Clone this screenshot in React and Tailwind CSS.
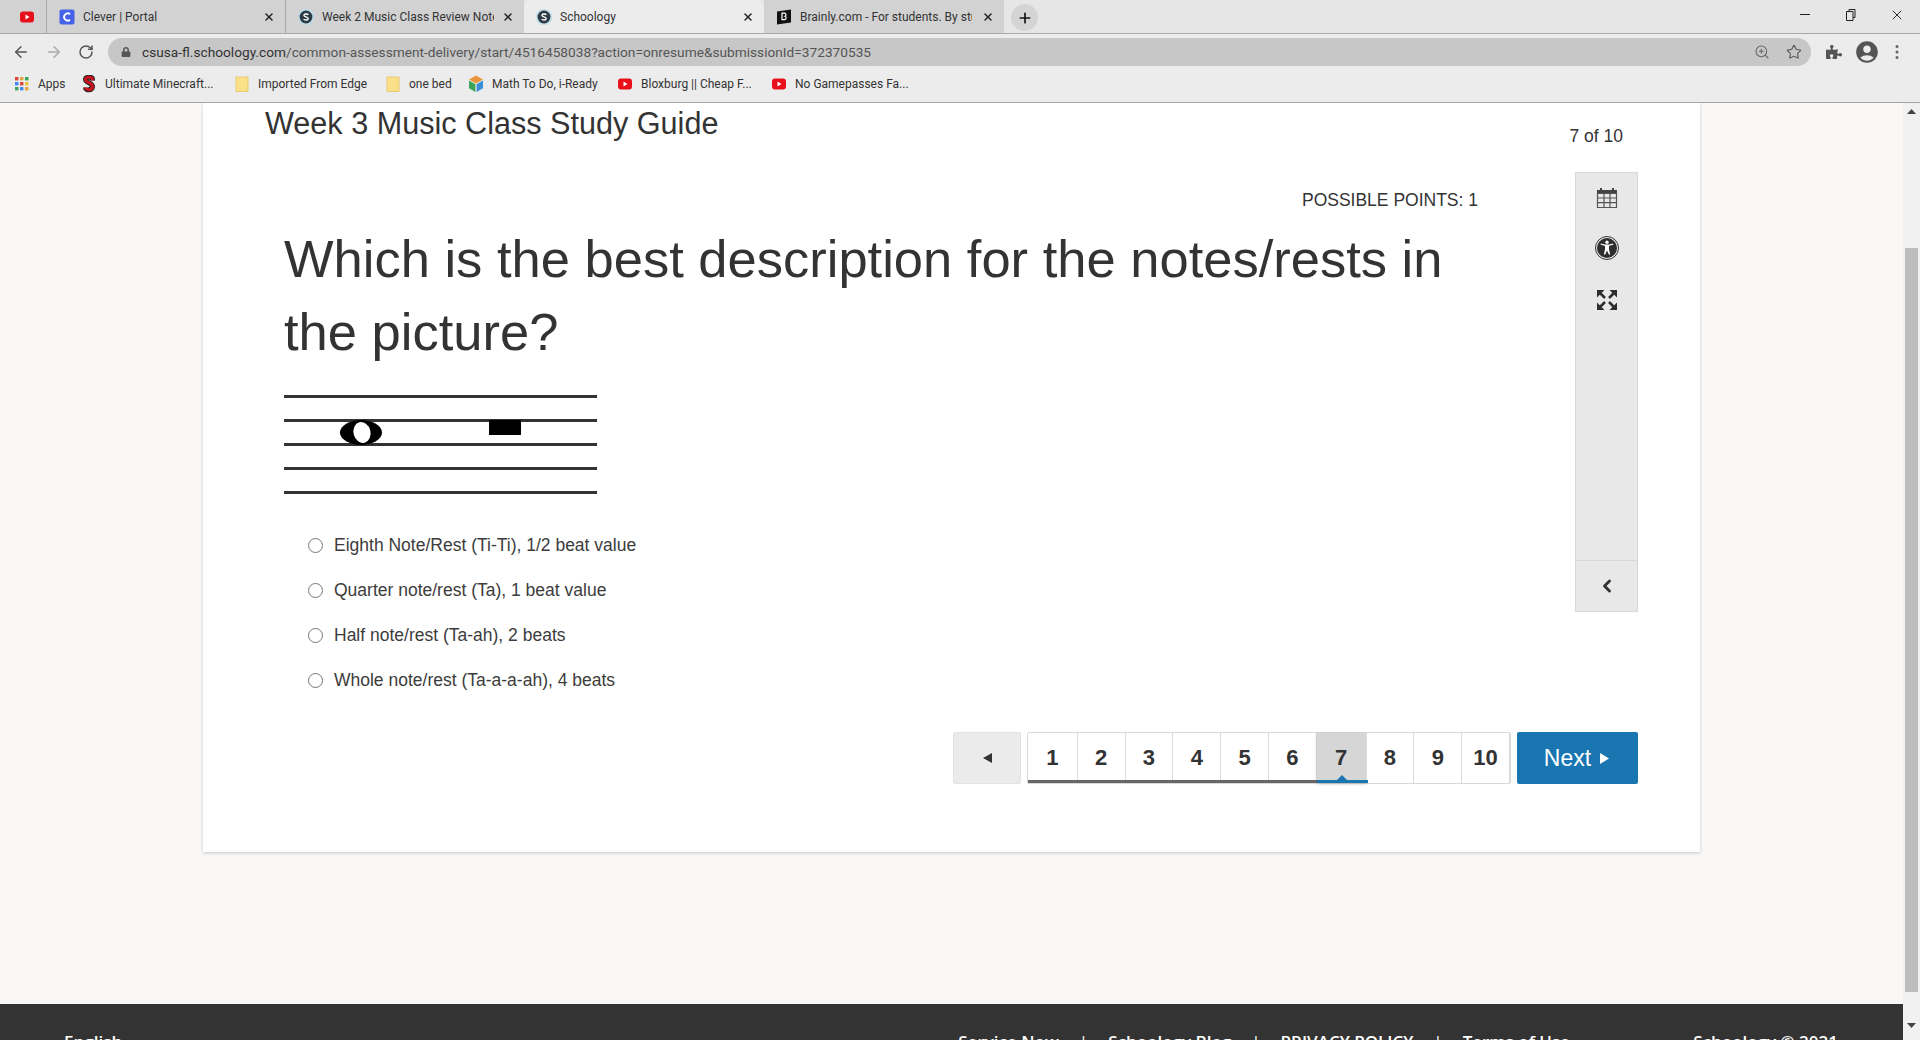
import React from "react";
import { ArrowLeft, ArrowRight, RotateCw, ZoomIn, Star, ChevronLeft, Plus, X } from "lucide-react";
import { FaLock, FaPuzzlePiece } from "react-icons/fa";
import { MdAccountCircle } from "react-icons/md";

const YT = () => (
  <svg width="16" height="16" viewBox="0 0 16 16" className="shrink-0">
    <rect x="1" y="2.5" width="14" height="11" rx="3" fill="#e8101a" />
    <path d="M6.5 5.5v5l4-2.5z" fill="#fff" />
  </svg>
);
const CleverIcon = () => (
  <svg width="16" height="16" viewBox="0 0 16 16" className="shrink-0">
    <rect x="0.5" y="0.5" width="15" height="15" rx="2" fill="#4563e8" />
    <path d="M11 5.2a3.6 3.6 0 1 0 0 5.6" fill="none" stroke="#fff" strokeWidth="1.8" />
  </svg>
);
const SchoologyIcon = () => (
  <svg width="16" height="16" viewBox="0 0 16 16" className="shrink-0">
    <circle cx="8" cy="8" r="8" fill="#bcdce8" />
    <circle cx="8" cy="8" r="6.4" fill="#2b3a45" />
    <path d="M10.4 5.8C9.6 4.8 6 4.6 5.9 6.4 5.8 8.2 10.3 7.6 10.2 9.6 10.1 11.4 6.4 11.2 5.6 10.1" fill="none" stroke="#fff" strokeWidth="1.4" />
  </svg>
);
const BrainlyIcon = () => (
  <svg width="16" height="16" viewBox="0 0 16 16" className="shrink-0">
    <path d="M1 2.5 15 0.5v13L1 15.5z" fill="#111" />
    <path d="M6 4.2h2.6c1.6 0 1.8 2.4.5 3 1.6.5 1.3 3.4-.6 3.4H6z" fill="none" stroke="#fff" strokeWidth="1.2" />
  </svg>
);
const AppsIcon = () => {
  const colors = ["#d9453a", "#e8a33a", "#3aa55a", "#4285f4", "#d9453a", "#e8c33a", "#3aa55a", "#4285f4", "#e8a33a"];
  return (
    <svg width="16" height="16" viewBox="0 0 16 16" className="shrink-0">
      {colors.map((c, i) => (
        <rect key={i} x={1 + (i % 3) * 5} y={1 + Math.floor(i / 3) * 5} width="3.4" height="3.4" fill={c} />
      ))}
    </svg>
  );
};
const SIcon = () => (
  <svg width="16" height="18" viewBox="0 0 16 18" className="shrink-0">
    <path d="M11.500 5.500V4C11.500 1.500 4.500 1.500 4.500 4.500 4.500 8 11.500 7.500 11.500 11.500 11.500 16 4.500 15.500 4.500 12.500" fill="none" stroke="#222" strokeWidth="5" />
    <path d="M11.500 5.500V4C11.500 1.500 4.500 1.500 4.500 4.500 4.500 8 11.500 7.500 11.500 11.500 11.500 16 4.500 15.500 4.500 12.500" fill="none" stroke="#c8141e" strokeWidth="3" />
  </svg>
);
const Folder = () => (
  <svg width="16" height="16" viewBox="0 0 16 16" className="shrink-0">
    <rect x="2" y="1" width="12" height="14.5" fill="#fbe08a" stroke="#e6c660" strokeWidth="0.8" />
  </svg>
);
const MathIcon = () => (
  <svg width="16" height="18" viewBox="0 0 16 18" className="shrink-0">
    <path d="M8 0.5 15 4.5 8 8.5 1 4.5z" fill="#e8943a" />
    <path d="M1 5.5 7.4 9.2V17L1 13.2z" fill="#3aa55a" />
    <path d="M15 5.5 8.6 9.2V17L15 13.2z" fill="#3a8fd9" />
  </svg>
);

const tabText = "text-[12px] text-[#333] whitespace-nowrap overflow-hidden";

function Tab({ w, icon, label, active, textW }) {
  return (
    <div className={`${w} h-[33px] shrink-0 flex items-center pl-3 pr-2 gap-2 ${active ? "bg-[#ececec] rounded-t-lg" : "bg-[#d2d2d2]"}`}>
      {icon}
      <span className={`${tabText} ${textW} shrink-0`}>{label}</span>
      <X size={12} strokeWidth={3} color="#222" className="ml-auto mr-[2px] shrink-0" />
    </div>
  );
}

const bookmarks = [
  { w: "w-[67px]", icon: <AppsIcon />, label: "Apps" },
  { w: "w-[153px]", icon: <SIcon />, label: "Ultimate Minecraft..." },
  { w: "w-[151px]", icon: <Folder />, label: "Imported From Edge" },
  { w: "w-[83px]", icon: <Folder />, label: "one bed" },
  { w: "w-[149px]", icon: <MathIcon />, label: "Math To Do, i-Ready" },
  { w: "w-[154px]", icon: <YT />, label: "Bloxburg || Cheap F..." },
  { w: "w-[140px]", icon: <YT />, label: "No Gamepasses Fa..." },
];

const CalendarIcon = () => (
  <svg width="22" height="22" viewBox="0 0 22 22">
    <path d="M1 3h20v3H1z" fill="#444" />
    <path d="M5 1v3M17 1v3" stroke="#444" strokeWidth="2" />
    <path d="M1.500 6.500h19v14h-19zM1.500 11h19M1.500 15.700h19M8 6.500v14M14 6.500v14" fill="none" stroke="#555" strokeWidth="1.200" />
  </svg>
);
const AccessIcon = () => (
  <svg width="24" height="24" viewBox="0 0 24 24">
    <circle cx="12" cy="12" r="11.500" fill="none" stroke="#333" strokeWidth="1" />
    <circle cx="12" cy="12" r="10" fill="#2e2e2e" />
    <circle cx="12" cy="6.300" r="1.700" fill="#fff" />
    <path d="M5.500 8.500 10 10v3.500L8.800 18.500h1.400l1.800-4 1.800 4h1.400L14 13.500V10l4.500-1.500-.4-1.100-4 1.200h-4.200l-4-1.200z" fill="#fff" />
  </svg>
);
const ExpandIcon = () => (
  <svg width="22" height="22" viewBox="0 0 22 22">
    <path d="M1 1h7.500L1 8.500zM21 1h-7.500L21 8.500zM1 21h7.500L1 13.500zM21 21h-7.500L21 13.500z" fill="#2e2e2e" />
    <path d="M3 3l6 6M19 3l-6 6M3 19l6-6M19 19l-6-6" stroke="#2e2e2e" strokeWidth="2.600" fill="none" />
  </svg>
);

const options = [
  "Eighth Note/Rest (Ti-Ti), 1/2 beat value",
  "Quarter note/rest (Ta), 1 beat value",
  "Half note/rest (Ta-ah), 2 beats",
  "Whole note/rest (Ta-a-a-ah), 4 beats",
];

const nums = [1, 2, 3, 4, 5, 6, 7, 8, 9, 10];

export default function App() {
  return (
    <div className="h-screen w-full overflow-hidden flex flex-col bg-[#f9f8f6] font-['Liberation_Sans',Arial,sans-serif] text-[#333]">
      {/* tab strip */}
      <div className="h-[34px] shrink-0 flex items-start bg-[#e6e6e6] border-b border-[#a9a9a9] font-['Roboto',sans-serif]">
        <div className="w-[47px] h-[33px] bg-[#d2d2d2] flex items-center pl-[19px] border-r border-[#aaa] shrink-0">
          <YT />
        </div>
        <Tab w="w-[238px]" icon={<CleverIcon />} label="Clever | Portal" textW="w-[172px]" />
        <div className="w-px h-[33px] bg-[#aaa] shrink-0" />
        <Tab w="w-[238px]" icon={<SchoologyIcon />} label="Week 2 Music Class Review Notes" textW="w-[172px]" />
        <Tab w="w-[240px]" icon={<SchoologyIcon />} label="Schoology" textW="w-[172px]" active />
        <Tab w="w-[240px]" icon={<BrainlyIcon />} label="Brainly.com - For students. By students." textW="w-[172px]" />
        <div className="ml-[7px] mt-[4px] w-[27px] h-[27px] rounded-full bg-[#d4d4d4] flex items-center justify-center shrink-0">
          <Plus size={16} strokeWidth={2.500} color="#111" />
        </div>
        <div className="ml-auto flex items-start shrink-0">
          <div className="w-[46px] h-[29px] flex items-center justify-center"><div className="w-[10px] h-px bg-[#222]" /></div>
          <div className="w-[46px] h-[29px] flex items-center justify-center">
            <svg width="10" height="12" viewBox="0 0 10 12"><path d="M3 2.500V.5h6v8H7M.5 2.500h6.500v9H.5z" fill="none" stroke="#222" /></svg>
          </div>
          <div className="w-[46px] h-[29px] flex items-center justify-center pr-[1px]"><X size={16} strokeWidth={1.300} color="#111" /></div>
        </div>
      </div>

      {/* toolbar */}
      <div className="h-[32px] shrink-0 flex items-end bg-[#ececec] text-[#666]">
        <div className="w-[108px] h-[28px] flex items-center shrink-0 pl-[12px] gap-[15px]">
          <ArrowLeft size={18} strokeWidth={2} color="#555" />
          <ArrowRight size={18} strokeWidth={2} color="#aaa" />
          <RotateCw size={16} strokeWidth={2.200} color="#555" />
        </div>
        <div className="w-[1703px] h-[28px] bg-[#c7c7c7] rounded-full flex items-center pl-[13px] pr-[9px] shrink-0">
          <FaLock size={10} color="#555" className="shrink-0" />
          <span className="ml-[11px] text-[13.700px] font-['Roboto',sans-serif] whitespace-nowrap text-[#333]">
            csusa-fl.schoology.com<span className="text-[#555]">/common-assessment-delivery/start/4516458038?action=onresume&amp;submissionId=372370535</span>
          </span>
          <ZoomIn size={16} strokeWidth={1.600} color="#666" className="ml-auto" />
          <Star size={16} strokeWidth={1.600} color="#555" className="ml-[16px]" />
        </div>
        <div className="h-[28px] flex items-center pl-[15px] gap-[12px] shrink-0">
          <FaPuzzlePiece size={16} color="#555" />
          <MdAccountCircle size={26} color="#555" />
          <svg width="4" height="16" viewBox="0 0 4 16" className="ml-[3px]"><circle cx="2" cy="2.500" r="1.500" fill="#666" /><circle cx="2" cy="8" r="1.500" fill="#666" /><circle cx="2" cy="13.500" r="1.500" fill="#666" /></svg>
        </div>
      </div>

      {/* bookmarks */}
      <div className="h-[37px] shrink-0 flex items-center pl-[14px] bg-[#ececec] border-b border-[#a5a5a5] font-['Roboto',sans-serif] text-[12px] text-[#333]">
        {bookmarks.map((b) => (
          <div key={b.label} className={`${b.w} shrink-0 flex items-center gap-[8px] whitespace-nowrap`}>
            {b.icon}
            <span>{b.label}</span>
          </div>
        ))}
      </div>

      {/* page + scrollbar */}
      <div className="flex-1 min-h-0 flex">
        <div className="flex-1 min-w-0 overflow-hidden flex flex-col">
          <div className="w-[1497px] h-[749px] mx-auto shrink-0 bg-white shadow-[0_1px_3px_rgba(0,0,0,0.2)] px-[62px]">
            <div className="h-[69px] flex justify-between items-start">
              <h1 className="text-[30.600px] leading-[40px] text-[#333]">Week 3 Music Class Study Guide</h1>
              <div className="text-[17.500px] leading-[24px] mt-[21px] mr-[15px] text-[#333]">7 of 10</div>
            </div>
            <div className="flex justify-between items-start">
              <div className="pl-[19px] w-[1233px]">
                <div className="text-[17.500px] leading-[24px] mt-[16px] text-right text-[#333] pr-[20px]">POSSIBLE POINTS: 1</div>
                <div className="text-[52.500px] leading-[73px] mt-[10px] text-[#333] pr-[20px]">
                  Which is the best description for the notes/rests in the picture?
                </div>
                <svg width="314" height="100" viewBox="0 0 314 100" className="block mt-[27px]">
                  {[1.500, 25.500, 49.500, 73.500, 97.500].map((y) => (
                    <rect key={y} x="0" y={y - 1.500} width="313" height="3" fill="#333" />
                  ))}
                  <ellipse cx="77" cy="37.500" rx="21" ry="12.500" fill="#000" />
                  <ellipse cx="78" cy="37.500" rx="8.500" ry="10.500" fill="#fff" transform="rotate(-15 78 37.500)" />
                  <rect x="205" y="25" width="32" height="15" fill="#000" />
                </svg>
                <div className="mt-[28px] flex flex-col pl-[24px]">
                  {options.map((o) => (
                    <label key={o} className="h-[45px] flex items-center gap-[11px] text-[17.500px] text-[#3c3c3c]">
                      <span className="w-[15px] h-[15px] rounded-full border border-[#767676] bg-white shrink-0" />
                      {o}
                    </label>
                  ))}
                </div>
              </div>
              <div className="w-[63px] h-[440px] shrink-0 bg-[#e8e8e8] border border-[#d8d8d8] flex flex-col items-center">
                <div className="mt-[14px] h-[22px]"><CalendarIcon /></div>
                <div className="mt-[27px] h-[24px]"><AccessIcon /></div>
                <div className="mt-[29px] h-[22px]"><ExpandIcon /></div>
                <div className="mt-auto w-full h-[51px] border-t border-[#d8d8d8] flex items-center justify-center">
                  <ChevronLeft size={20} strokeWidth={3.500} color="#333" />
                </div>
              </div>
            </div>
            <div className="mt-[29px] flex justify-end items-start gap-[6px] h-[52px]">
              <div className="w-[68px] h-[52px] bg-[#ebebeb] border border-[#e2e2e2] rounded-[2px] flex items-center justify-center">
                <svg width="9" height="10" viewBox="0 0 9 10"><path d="M9 0v10L0 5z" fill="#333" /></svg>
              </div>
              <div className="w-[484px] h-[52px] flex border border-[#d8d8d8] rounded-[2px] relative">
                {nums.map((n) => (
                  <div
                    key={n}
                    className={`flex items-center justify-center text-[22px] font-bold border-r border-[#dcdcdc] last:border-r-0 pb-[2px] ${n === 1 || n === 7 ? "w-[50px]" : "w-[48px]"} ${n === 7 ? "bg-[#d6d6d6] shadow-[0_1px_3px_rgba(0,0,0,0.2)]" : "bg-white"}`}
                  >
                    {n}
                  </div>
                ))}
                <div className="absolute left-0 bottom-0 h-[3px] w-[289px] bg-[#666]" />
                <div className="absolute left-[289px] bottom-0 h-[3px] w-[51px] bg-[#1a76b0]" />
                <svg width="10" height="5" viewBox="0 0 10 5" className="absolute bottom-[3px] left-[309px]"><path d="M0 5h10L5 0z" fill="#1a76b0" /></svg>
              </div>
              <div className="w-[121px] h-[52px] bg-[#1a76b0] rounded-[2px] text-white text-[23px] flex items-center justify-center gap-[9px] pr-[2px]">
                Next
                <svg width="9" height="11" viewBox="0 0 9 11"><path d="M0 0v11l9-5.500z" fill="#fff" /></svg>
              </div>
            </div>
          </div>
          <div className="mt-[152px] h-[120px] shrink-0 bg-[#333] pt-[27px] px-[64px] flex items-start text-white text-[17px] font-semibold font-['Open_Sans',sans-serif] leading-[22px] whitespace-nowrap">
            <span>English</span>
            <div className="ml-[836px] flex gap-[20px]">
              <span>Service Now</span><span className="font-normal">|</span>
              <span>Schoology Blog</span><span className="font-normal">|</span>
              <span>PRIVACY POLICY</span><span className="font-normal">|</span>
              <span>Terms of Use</span>
            </div>
            <span className="ml-auto mr-[1px]">Schoology © 2021</span>
          </div>
        </div>
        <div className="w-[17px] shrink-0 bg-[#f1f1f1] flex flex-col items-center relative">
          <svg width="9" height="5" viewBox="0 0 9 5" className="mt-[6px]"><path d="M0 5h9L4.500 0z" fill="#444" /></svg>
          <div className="w-[13px] h-[744px] mt-[134px] bg-[#bdbdbd]" />
          <svg width="9" height="5" viewBox="0 0 9 5" className="mt-[31px]"><path d="M0 0h9L4.500 5z" fill="#444" /></svg>
        </div>
      </div>
    </div>
  );
}
